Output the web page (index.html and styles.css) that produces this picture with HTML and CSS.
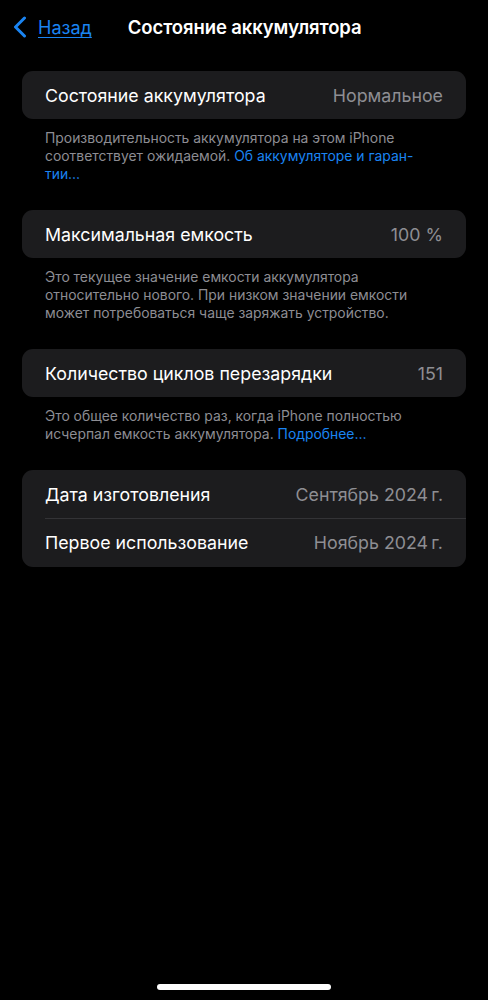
FILE: index.html
```html
<!DOCTYPE html>
<html lang="ru">
<head>
<meta charset="utf-8">
<link rel="stylesheet" href="styles.css">
</head>
<body>
<div class="screen">
  <header class="nav">
    <a class="back" href="#">
      <svg class="chev" width="16" height="22" viewBox="0 0 16 22"><path d="M12.5 2 L3.5 11 L12.5 20" fill="none" stroke="#1a84f2" stroke-width="3" stroke-linecap="round" stroke-linejoin="round"/></svg>
      <span class="back-text">Назад</span>
    </a>
    <h1 class="title">Состояние аккумулятора</h1>
  </header>

  <section class="group">
    <div class="card">
      <div class="row"><span class="label">Состояние аккумулятора</span><span class="value">Нормальное</span></div>
    </div>
    <p class="footer"><span>Производительность аккумулятора на этом iPhone</span><br><span>соответствует ожидаемой.</span> <a class="link" href="#">Об аккумуляторе и гаран-</a><br><a class="link" href="#">тии…</a></p>
  </section>

  <section class="group">
    <div class="card">
      <div class="row"><span class="label">Максимальная емкость</span><span class="value">100 %</span></div>
    </div>
    <p class="footer">Это текущее значение емкости аккумулятора<br>относительно нового. При низком значении емкости<br>может потребоваться чаще заряжать устройство.</p>
  </section>

  <section class="group">
    <div class="card">
      <div class="row"><span class="label">Количество циклов перезарядки</span><span class="value">151</span></div>
    </div>
    <p class="footer"><span>Это общее количество раз, когда iPhone полностью</span><br><span>исчерпал емкость аккумулятора.</span> <a class="link" href="#">Подробнее…</a></p>
  </section>

  <section class="group">
    <div class="card">
      <div class="row"><span class="label">Дата изготовления</span><span class="value">Сентябрь 2024&#8201;г.</span></div>
      <div class="row sep"><span class="label">Первое использование</span><span class="value">Ноябрь 2024&#8201;г.</span></div>
    </div>
  </section>

  <div class="home-bar"></div>
</div>
</body>
</html>
```
FILE: styles.css
```css
* { box-sizing: border-box; }
html, body {
  margin: 0;
  padding: 0;
  background: #000;
}
body {
  font-family: Inter, "Noto Sans", "Liberation Sans", sans-serif;
  color: #fff;
  -webkit-font-smoothing: antialiased;
}
.screen {
  width: 488px;
  height: 1000px;
  position: relative;
  display: flex;
  flex-direction: column;
}
.nav {
  height: 54px;
  display: flex;
  align-items: center;
  position: relative;
  margin-bottom: 17px;
}
.back {
  display: flex;
  align-items: center;
  gap: 10px;
  padding-left: 12px;
  color: #1a84f2;
  text-decoration: none;
}
.chev { display: block; }
.back-text {
  font-size: 18px;
  text-decoration: underline;
  text-underline-offset: 3px;
  text-decoration-thickness: 1px;
}
.title {
  margin: 0 0 0 36px;
  font-size: 18.5px;
  font-weight: 600;
  letter-spacing: -0.1px;
}
.group {
  padding: 0 22px;
}
.card {
  background: #1c1c1e;
  border-radius: 11px;
  overflow: hidden;
}
.row {
  height: 48px;
  display: flex;
  align-items: center;
  justify-content: space-between;
  padding: 0 23px;
  font-size: 17.8px;
  position: relative;
}
.row.sep { height: 49px; }
.row.sep::before {
  content: "";
  position: absolute;
  left: 23px;
  right: 0;
  top: 0;
  height: 1px;
  background: #333336;
}
.label { color: #fff; }
.value { color: #8e8e93; }
.footer {
  margin: 0;
  padding: 10px 23px 27px;
  font-size: 13.9px;
  line-height: 18px;
  color: #8d8d93;
  white-space: nowrap;
}
.link {
  color: #1a84f2;
  text-decoration: none;
}
.home-bar {
  position: absolute;
  left: 157px;
  top: 984px;
  width: 174px;
  height: 6px;
  border-radius: 3px;
  background: #fff;
}
```
